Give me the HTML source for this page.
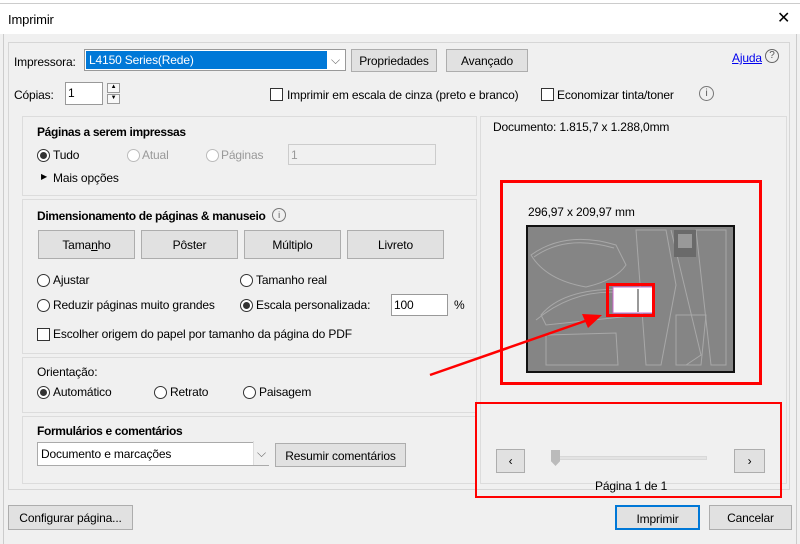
<!DOCTYPE html>
<html><head><meta charset="utf-8"><style>
*{box-sizing:border-box;margin:0;padding:0}
body{width:800px;height:544px;background:#f0f0f0;font-family:"Liberation Sans",sans-serif;font-size:12px;letter-spacing:-0.15px;color:#000;position:relative;overflow:hidden}
.a{position:absolute;white-space:nowrap}
.btn{position:absolute;background:#e1e1e1;border:1px solid #adadad;text-align:center}
.panel{position:absolute;border:1px solid #dcdcdc;background:#f0f0f0}
.rad{position:absolute;width:13px;height:13px;border:1px solid #333;border-radius:50%;background:#fff}
.rad.on::after{content:"";position:absolute;left:2px;top:2px;width:7px;height:7px;border-radius:50%;background:#333}
.rad.dis{border-color:#bbb}
.chk{position:absolute;width:13px;height:13px;border:1px solid #333;background:#fff}
.b{font-weight:bold;letter-spacing:-0.35px}
.dis{color:#999}
</style></head><body>
<div class="a" style="left:0;top:0;width:800px;height:34px;background:#fff"></div>
<div class="a" style="left:0;top:0;width:800px;height:4px;background:#fff;border-bottom:1px solid #ccc"></div>
<div class="a" style="left:8px;top:12px;font-size:13px">Imprimir</div>
<div class="a" style="left:777px;top:8px;font-size:16px">✕</div>
<div class="a" style="left:3px;top:34px;width:794px;height:510px;border-left:1px solid #ccc;border-right:1px solid #ccc"></div>
<div class="panel" style="left:8px;top:42px;width:782px;height:448px;border-color:#d6d6d6"></div>

<div class="a" style="left:14px;top:55px">Impressora:</div>
<div class="a" style="left:84px;top:49px;width:262px;height:22px;border:1px solid #999;background:#fff"></div>
<div class="a" style="left:86px;top:51px;width:241px;height:18px;background:#0078d7;color:#fff;padding:2px 3px">L4150 Series(Rede)</div>
<div class="a" style="left:331px;top:53px;color:#666">⌵</div>
<div class="btn" style="left:351px;top:49px;width:86px;height:23px;padding-top:4px">Propriedades</div>
<div class="btn" style="left:446px;top:49px;width:82px;height:23px;padding-top:4px">Avançado</div>
<div class="a" style="left:732px;top:51px;color:#00e;text-decoration:underline">Ajuda</div>
<div class="a" style="left:765px;top:49px;width:14px;height:14px;border:1px solid #666;border-radius:50%;font-size:10px;text-align:center;line-height:12px;color:#555">?</div>

<div class="a" style="left:14px;top:88px">Cópias:</div>
<div class="a" style="left:65px;top:82px;width:38px;height:23px;border:1px solid #999;background:#fff;padding:3px 2px">1</div>
<div class="a" style="left:107px;top:83px;width:13px;height:10px;border:1px solid #999;background:#f8f8f8;font-size:6px;text-align:center">▲</div>
<div class="a" style="left:107px;top:94px;width:13px;height:10px;border:1px solid #999;background:#f8f8f8;font-size:6px;text-align:center">▼</div>
<div class="chk" style="left:270px;top:88px"></div>
<div class="a" style="left:287px;top:88px">Imprimir em escala de cinza (preto e branco)</div>
<div class="chk" style="left:541px;top:88px"></div>
<div class="a" style="left:557px;top:88px">Economizar tinta/toner</div>
<div class="a" style="left:699px;top:86px;width:15px;height:15px;border:1px solid #777;border-radius:50%;font-size:10px;text-align:center;line-height:13px;color:#555">i</div>

<div class="panel" style="left:22px;top:116px;width:455px;height:80px"></div>
<div class="a b" style="left:37px;top:125px">Páginas a serem impressas</div>
<div class="rad on" style="left:37px;top:149px"></div><div class="a" style="left:53px;top:148px">Tudo</div>
<div class="rad dis" style="left:127px;top:149px"></div><div class="a dis" style="left:142px;top:148px">Atual</div>
<div class="rad dis" style="left:206px;top:149px"></div><div class="a dis" style="left:221px;top:148px">Páginas</div>
<div class="a dis" style="left:288px;top:144px;width:148px;height:21px;border:1px solid #ccc;background:#f0f0f0;padding:3px 2px">1</div>
<div class="a" style="left:41px;top:172px;font-size:8px">▶</div>
<div class="a" style="left:53px;top:171px">Mais opções</div>

<div class="panel" style="left:22px;top:199px;width:455px;height:155px"></div>
<div class="a b" style="left:37px;top:209px">Dimensionamento de páginas &amp; manuseio</div>
<div class="a" style="left:272px;top:208px;width:14px;height:14px;border:1px solid #777;border-radius:50%;font-size:9px;text-align:center;line-height:12px;color:#555">i</div>
<div class="btn" style="left:38px;top:230px;width:97px;height:29px;padding-top:7px">Tama<u>n</u>ho</div>
<div class="btn" style="left:141px;top:230px;width:97px;height:29px;padding-top:7px">Pôster</div>
<div class="btn" style="left:244px;top:230px;width:97px;height:29px;padding-top:7px">Múltiplo</div>
<div class="btn" style="left:347px;top:230px;width:97px;height:29px;padding-top:7px">Livreto</div>
<div class="rad" style="left:37px;top:274px"></div><div class="a" style="left:53px;top:273px">Ajustar</div>
<div class="rad" style="left:240px;top:274px"></div><div class="a" style="left:256px;top:273px">Tamanho real</div>
<div class="rad" style="left:37px;top:299px"></div><div class="a" style="left:53px;top:298px">Reduzir páginas muito grandes</div>
<div class="rad on" style="left:240px;top:299px"></div><div class="a" style="left:256px;top:298px">Escala personalizada:</div>
<div class="a" style="left:391px;top:294px;width:57px;height:22px;border:1px solid #999;background:#fff;padding:3px 2px">100</div>
<div class="a" style="left:454px;top:298px">%</div>
<div class="chk" style="left:37px;top:328px"></div><div class="a" style="left:53px;top:327px">Escolher origem do papel por tamanho da página do PDF</div>

<div class="panel" style="left:22px;top:357px;width:455px;height:56px"></div>
<div class="a" style="left:37px;top:365px">Orientação:</div>
<div class="rad on" style="left:37px;top:386px"></div><div class="a" style="left:53px;top:385px">Automático</div>
<div class="rad" style="left:154px;top:386px"></div><div class="a" style="left:170px;top:385px">Retrato</div>
<div class="rad" style="left:243px;top:386px"></div><div class="a" style="left:259px;top:385px">Paisagem</div>

<div class="panel" style="left:22px;top:416px;width:455px;height:68px"></div>
<div class="a b" style="left:37px;top:424px">Formulários e comentários</div>
<div class="a" style="left:37px;top:442px;width:232px;height:24px;border:1px solid #aaa;background:#fff;padding:4px 3px">Documento e marcações</div>
<div class="a" style="left:253px;top:441px;width:16px;height:24px;background:#f0f0f0;border-left:1px solid #ddd;color:#666;text-align:center;padding-top:5px">⌵</div>
<div class="btn" style="left:275px;top:443px;height:24px;padding-top:5px;width:131px">Resumir comentários</div>

<div class="panel" style="left:480px;top:116px;width:307px;height:368px"></div>
<div class="a" style="left:493px;top:120px">Documento: 1.815,7 x 1.288,0mm</div>
<div class="a" style="left:528px;top:205px">296,97 x 209,97 mm</div>
<div class="a" style="left:526px;top:225px;width:209px;height:148px;background:#858585;border:2px solid #111"></div>
<svg class="a" style="left:526px;top:225px" width="209" height="148" viewBox="0 0 209 148">
<g fill="none" stroke="#a8a8a8" stroke-width="1">
<path d="M5 30 Q40 5 90 20 L100 40 Q90 55 60 62 Q20 55 5 30Z"/><path d="M8 32 Q40 9 88 23"/>
<path d="M15 90 Q40 60 110 65 L115 90 L20 100Z"/><path d="M10 95 Q50 62 100 68"/>
<path d="M20 110 L90 108 L92 140 L20 140Z"/>
<path d="M110 5 L120 140 L135 140 L150 60 L140 5Z"/>
<path d="M145 5 L175 130 L160 140"/>
<path d="M170 5 L200 5 L200 140 L185 140Z"/>
<path d="M150 90 L180 90 L175 140 L150 140Z"/>
</g>
<rect x="148" y="5" width="22" height="27" fill="#6a6a6a"/><rect x="152" y="9" width="14" height="14" fill="#999"/>
<rect x="87" y="62" width="40" height="26" fill="#fff" stroke="#c6c" stroke-width="1"/>
<line x1="112" y1="64" x2="112" y2="87" stroke="#333"/>
</svg>
<div class="a" style="left:500px;top:180px;width:262px;height:205px;border:3px solid #f00"></div>
<div class="a" style="left:606px;top:283px;width:49px;height:34px;border:3px solid #f00"></div>
<svg class="a" style="left:420px;top:300px" width="200" height="90"><line x1="10" y1="75" x2="168" y2="20" stroke="#f00" stroke-width="2.5"/><polygon points="182,15 162,14 168,28" fill="#f00"/></svg>

<div class="a" style="left:475px;top:402px;width:307px;height:96px;border:2px solid #f00"></div>
<div class="btn" style="left:496px;top:449px;width:29px;height:24px;padding-top:4px">‹</div>
<div class="btn" style="left:734px;top:449px;width:31px;height:24px;padding-top:4px">›</div>
<div class="a" style="left:555px;top:456px;width:152px;height:4px;background:#e3e3e3;border:1px solid #d8d8d8"></div>
<div class="a" style="left:551px;top:450px;width:9px;height:16px;background:#bbb;clip-path:polygon(0 0,100% 0,100% 70%,50% 100%,0 70%)"></div>
<div class="a" style="left:595px;top:479px">Página 1 de 1</div>

<div class="btn" style="left:8px;top:505px;width:125px;height:25px;padding-top:5px">Configurar página...</div>
<div class="btn" style="left:615px;top:505px;width:85px;height:25px;padding-top:5px;border:2px solid #0078d7">Imprimir</div>
<div class="btn" style="left:709px;top:505px;width:83px;height:25px;padding-top:5px">Cancelar</div>
</body></html>
